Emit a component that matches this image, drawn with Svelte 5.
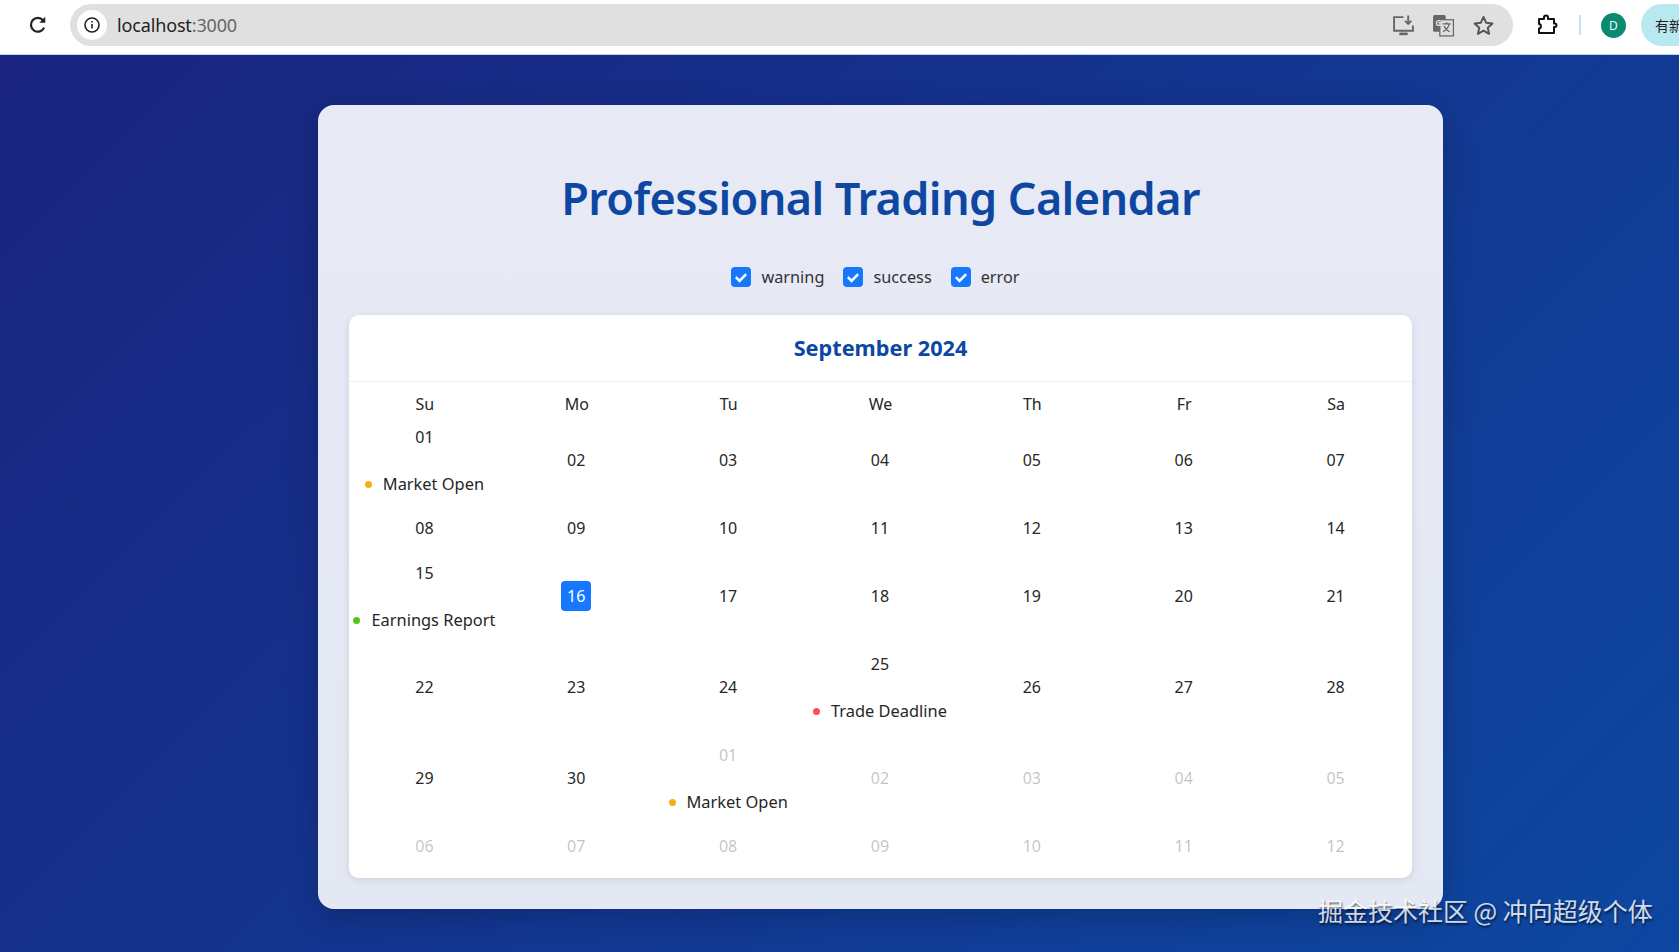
<script>
  const days = ["Su", "Mo", "Tu", "We", "Th", "Fr", "Sa"];
  const filters = ["warning", "success", "error"];
  const events = {
    "2024-09-01": { type: "warning", text: "Market Open" },
    "2024-09-15": { type: "success", text: "Earnings Report" },
    "2024-09-25": { type: "error", text: "Trade Deadline" },
    "2024-10-01": { type: "warning", text: "Market Open" }
  };

  // 6 weeks starting on Sep 1 2024 (a Sunday)
  let cells = [];
  for (let i = 0; i < 42; i++) {
    const inMonth = i < 30;
    const month = inMonth ? "09" : "10";
    const day = String(inMonth ? i + 1 : i - 29).padStart(2, "0");
    cells.push({ day, inMonth, today: inMonth && day === "16", event: events["2024-" + month + "-" + day] });
  }
</script>

<div class="page">
  <header class="toolbar">
    <svg class="reload" width="22" height="22" viewBox="0 0 20 20" fill="none" stroke="#222" stroke-width="2">
      <path d="M15.6 12.4A6.3 6.3 0 1 1 14.6 5.6L16 7" />
      <path d="M16.6 2.6v5.4h-5.4z" fill="#222" stroke="none" />
    </svg>
    <div class="omnibox">
      <span class="site-info">
        <svg width="18" height="18" viewBox="0 0 18 18" fill="none" stroke="#222" stroke-width="1.6">
          <circle cx="9" cy="9" r="7" />
          <path d="M9 8v4.4M9 5v1.6" />
        </svg>
      </span>
      <span class="url">localhost<span class="port">:3000</span></span>
      <span class="omni-icons">
        <svg width="23" height="23" viewBox="0 0 22 22" fill="none" stroke="#666" stroke-width="1.8">
          <path d="M11 3H2v13h18v-5" />
          <path d="M15.5 1.5v8M12.5 6.5l3 3 3-3" />
          <path d="M7 19h8" stroke-width="2.5" />
        </svg>
        <svg width="23" height="23" viewBox="0 0 22 22">
          <rect x="1" y="1" width="12" height="16" rx="1.500" fill="#666" />
          <rect x="7.500" y="5.500" width="13" height="15.500" fill="#e0e0e0" stroke="#666" stroke-width="1.2" />
          <text class="g" x="3" y="11">G</text>
          <path d="M10 9.500h8M14 8v1.500M16.500 9.500c-.8 3.500-3 6-6 7.500M11.500 11.500c1 2.500 3 4.500 5.500 5.500" fill="none" stroke="#666" stroke-width="1.1" />
        </svg>
        <svg width="23" height="23" viewBox="0 0 22 22" fill="none" stroke="#555" stroke-width="1.9" stroke-linejoin="round">
          <path d="M11 2.800l2.500 5.500 6 .7-4.400 4.100 1.200 5.900L11 16l-5.300 3 1.200-5.900L2.500 9l6-.7z" />
        </svg>
      </span>
    </div>
    <svg class="ext" width="22" height="22" viewBox="0 0 22 22" fill="none" stroke="#111" stroke-width="2" stroke-linejoin="round">
      <path d="M3 5h5V3.500a2 2 0 0 1 4 0V5h6v4.500h1.500a2 2 0 0 1 0 3.500H18v6H3v-4.500c2.500 0 2.500-4.500 0-4.500z" />
    </svg>
    <span class="sep"></span>
    <span class="avatar">D</span>
    <span class="update">有新</span>
  </header>

  <main class="content">
    <section class="card">
      <h1>Professional Trading Calendar</h1>
      <div class="filters">
        {#each filters as f}
          <label class="filter">
            <span class="box">
              <svg width="16" height="16" viewBox="0 0 14 14" fill="none" stroke="#fff" stroke-width="2.2">
                <path d="M2.500 7.200l3.200 3.200 5.800-6" />
              </svg>
            </span>
            {f}
          </label>
        {/each}
      </div>
      <div class="calendar">
        <div class="month">September 2024</div>
        <div class="grid">
          {#each days as d}
            <div class="dow">{d}</div>
          {/each}
          {#each cells as c}
            <div class="cell" class:muted={!c.inMonth}>
              <span class="date" class:today={c.today}>{c.day}</span>
              {#if c.event}
                <span class="event">
                  <i class="dot {c.event.type}"></i>{c.event.text}
                </span>
              {/if}
            </div>
          {/each}
        </div>
      </div>
    </section>
  </main>

  <div class="watermark">掘金技术社区 @ 冲向超级个体</div>
</div>

<style>
  :global(body) {
    margin: 0;
    font-family: "Noto Sans", "Open Sans", sans-serif;
  }
  .page {
    position: relative;
    height: 952px;
    width: 1679px;
    overflow: hidden;
    background: linear-gradient(135deg, #1a237e 0%, #0d47a1 100%);
  }
  .toolbar {
    height: 55px;
    background: #fff;
    border-bottom: 1px solid #c5d3ea;
    box-sizing: border-box;
    display: flex;
    align-items: center;
    padding-left: 27px;
    overflow: hidden;
  }
  .reload {
    flex: none;
    margin: -4px 21px 0 0;
  }
  .omnibox {
    flex: none;
    width: 1443px;
    height: 42px;
    margin-top: -4px;
    border-radius: 21px;
    background: #e0e0e0;
    display: flex;
    align-items: center;
    box-sizing: border-box;
    padding: 0 18px 0 7px;
  }
  .site-info {
    width: 30px;
    height: 30px;
    border-radius: 50%;
    background: #fff;
    display: flex;
    align-items: center;
    justify-content: center;
    margin-right: 10px;
  }
  .url {
    font-size: 18px;
    letter-spacing: -0.15px;
    color: #222;
  }
  .port {
    color: #666;
  }
  .omni-icons {
    margin-left: auto;
    display: flex;
    gap: 17px;
  }
  .g {
    font-size: 8px;
    font-weight: 700;
    fill: #e0e0e0;
  }
  .ext {
    flex: none;
    margin: -4px 0 0 23px;
  }
  .sep {
    flex: none;
    width: 2px;
    height: 20px;
    margin: -4px 0 0 21px;
    background: #bfe3ea;
  }
  .avatar {
    flex: none;
    width: 25px;
    height: 25px;
    margin: -4px 0 0 20px;
    border-radius: 50%;
    background: #0b8a72;
    color: #e6fff6;
    font-size: 12px;
    line-height: 25px;
    text-align: center;
  }
  .update {
    flex: none;
    height: 42px;
    width: 80px;
    margin: -4px 0 0 15px;
    padding-left: 14px;
    box-sizing: border-box;
    border-radius: 21px 0 0 21px;
    background: #b9e9f0;
    color: #222;
    font: 14px/42px "Noto Sans CJK SC", sans-serif;
  }
  .content {
    padding: 50px 0 0 318px;
  }
  .card {
    width: 1125px;
    height: 804px;
    box-sizing: border-box;
    padding: 0 31px;
    background: linear-gradient(180deg, #e8eaf6 0%, #e3e8f3 100%);
    border-radius: 16px;
    box-shadow: 0 8px 32px rgba(0, 0, 0, 0.2);
  }
  h1 {
    margin: 0;
    padding-top: 60px;
    color: #0d47a1;
    font-size: 45px;
    font-weight: 600;
    letter-spacing: -0.6px;
    line-height: 66px;
    text-align: center;
  }
  .filters {
    margin-top: 34px;
    padding-right: 10px;
    height: 24px;
    display: flex;
    justify-content: center;
    align-items: center;
    gap: 19px;
  }
  .filter {
    display: flex;
    align-items: center;
    gap: 10px;
    font-size: 16.300px;
    color: #333;
  }
  .box {
    width: 20px;
    height: 20px;
    border-radius: 4px;
    background: #1677ff;
    display: flex;
    align-items: center;
    justify-content: center;
  }
  .calendar {
    margin-top: 26px;
    height: 563px;
    background: #fff;
    border-radius: 10px;
    box-shadow: 0 2px 8px rgba(0, 0, 0, 0.1);
  }
  .month {
    height: 67px;
    box-sizing: border-box;
    border-bottom: 1px solid #f0f0f0;
    color: #0d47a1;
    font-size: 21.700px;
    font-weight: 700;
    line-height: 65px;
    text-align: center;
  }
  .grid {
    display: grid;
    grid-template-columns: repeat(7, 1fr);
    font-size: 16px;
    color: #262626;
  }
  .dow {
    height: 32.500px;
    line-height: 44px;
    text-align: center;
  }
  .cell {
    position: relative;
    left: -0.5px;
    padding: 7.500px 0;
    display: flex;
    flex-direction: column;
    align-items: center;
    justify-content: center;
    min-height: 30px;
  }
  .muted {
    color: rgba(0, 0, 0, 0.25);
  }
  .date {
    width: 30px;
    height: 30px;
    line-height: 31px;
    text-align: center;
    border-radius: 4px;
  }
  .today {
    background: #1677ff;
    color: #fff;
  }
  .event {
    margin: 21px 0 3px;
    height: 22px;
    line-height: 22px;
    display: flex;
    align-items: center;
    color: #262626;
    font-size: 16.400px;
    white-space: nowrap;
  }
  .dot {
    width: 7px;
    height: 7px;
    border-radius: 50%;
    margin-right: 11px;
  }
  .warning {
    background: #faad14;
  }
  .success {
    background: #52c41a;
  }
  .error {
    background: #ff4d4f;
  }
  .watermark {
    position: absolute;
    left: 1318px;
    top: 893px;
    color: #fff;
    opacity: 0.8;
    font: 25px/34px "Noto Sans CJK SC", sans-serif;
    text-shadow: 1px 2px 2px rgba(0, 0, 0, 0.7);
    white-space: nowrap;
  }
</style>
